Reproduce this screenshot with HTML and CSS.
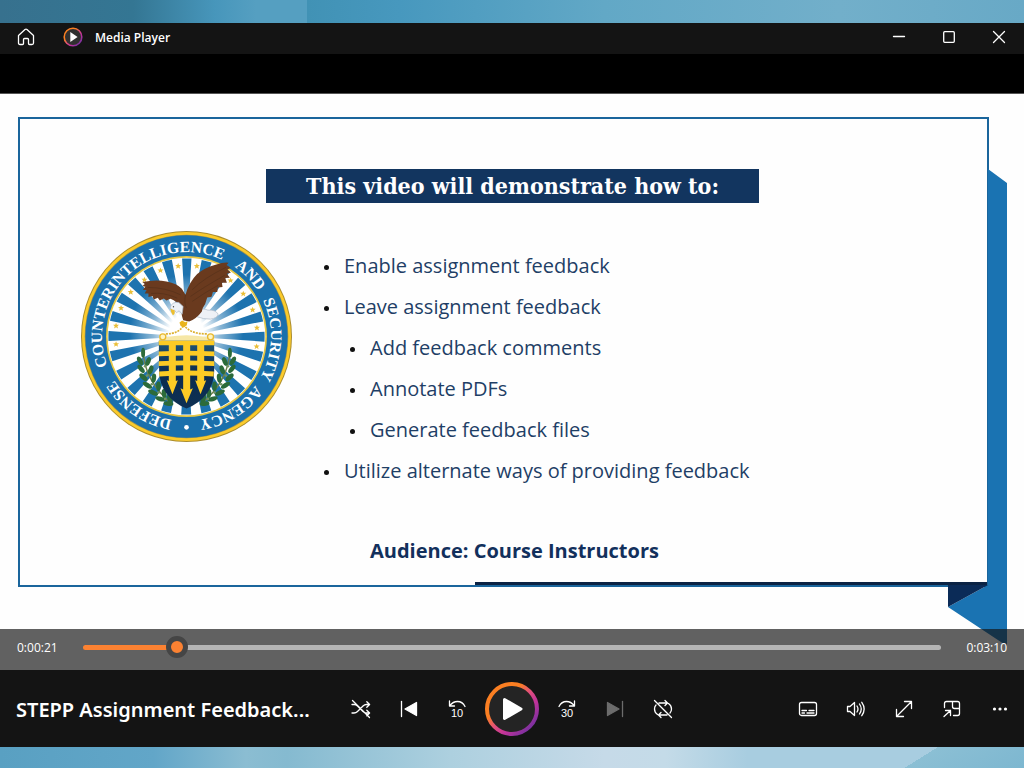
FILE: index.html
```html
<!DOCTYPE html>
<html lang="en">
<head>
  <meta charset="UTF-8">
  <title>Media Player</title>
  <link rel="stylesheet" href="styles.css">
</head>
<body>

  <div class="player">
    <header class="titlebar">
      <button class="home" aria-label="Home">
        <svg width="18" height="18" viewBox="0 0 18 18"><path d="M1.500 7.500 L8 1.600 Q9 .8 10 1.600 L16.500 7.500 V15 Q16.500 16.500 15 16.500 H12.500 Q11.500 16.500 11.500 15.500 V11.500 Q11.500 10.500 10.500 10.500 H7.500 Q6.500 10.500 6.500 11.500 V15.500 Q6.500 16.500 5.500 16.500 H3 Q1.500 16.500 1.500 15 Z"/></svg>
      </button>
      <svg class="app-icon" width="20" height="20" viewBox="0 0 20 20">
        <defs>
          <linearGradient id="ring" x1="0.1" y1="0.1" x2="0.9" y2="0.9">
            <stop offset="0.3" stop-color="#fb7f22"/>
            <stop offset="0.5" stop-color="#e2507a"/>
            <stop offset="0.7" stop-color="#c2339a"/>
            <stop offset="1" stop-color="#7430a0"/>
          </linearGradient>
        </defs>
        <circle cx="10" cy="10" r="8.8" fill="#303030" stroke="url(#ring)" stroke-width="1.6"/>
        <path d="M7.300 5 L14.600 10 L7.300 15 Z" fill="#fff"/>
      </svg>
      <span class="app-name">Media Player</span>
      <div class="window-buttons">
        <button aria-label="Minimize"><svg width="14" height="14" viewBox="0 0 14 14"><path d="M1.500 6.500 H12.500"/></svg></button>
        <button aria-label="Maximize"><svg width="14" height="14" viewBox="0 0 14 14"><rect x="1.700" y="1.700" width="10.600" height="10.600" rx="1"/></svg></button>
        <button aria-label="Close"><svg width="14" height="14" viewBox="0 0 14 14"><path d="M1.500 1.500 L12.500 12.500 M12.500 1.500 L1.500 12.500"/></svg></button>
      </div>
    </header>

    <main class="stage">
      <div class="slide">
        <section class="frame">
          <h1>This video will demonstrate how to:</h1>
          <div class="slide-body">
            <svg class="seal" viewBox="32 34 632 632" role="img" aria-label="Defense Counterintelligence and Security Agency seal">
              <defs>
                <radialGradient id="glow">
                  <stop offset="0.25" stop-color="#fff"/>
                  <stop offset="0.5" stop-color="#fff" stop-opacity="0.5"/>
                  <stop offset="0.85" stop-color="#fff" stop-opacity="0"/>
                </radialGradient>
                <linearGradient id="shield" x1="0" y1="0" x2="0" y2="1">
                  <stop offset="0" stop-color="#1d5579"/>
                  <stop offset="0.5" stop-color="#0b2a4e"/>
                  <stop offset="1" stop-color="#0d3154"/>
                </linearGradient>
                <path id="text-ring" d="M348 603 A253 253 0 0 1 348 97 A253 253 0 0 1 348 603"/>
                <path id="star" d="M0 -9 L2.500 -3 L9 -3 L4 1.500 L6 8 L0 4 L-6 8 L-4 1.500 L-9 -3 L-2.500 -3 Z"/>
                <g id="laurel">
                  <path d="M38 78 Q42 170 126 238" fill="none" stroke="#6d7f4a" stroke-width="4"/>
                  <g fill="#2c6b3a">
                    <ellipse cx="38" cy="84" rx="6" ry="15"/>
                    <ellipse cx="29" cy="108" rx="7" ry="14" transform="rotate(-30 29 108)"/>
                    <ellipse cx="53" cy="110" rx="7" ry="14" transform="rotate(22 53 110)"/>
                    <ellipse cx="32" cy="132" rx="7" ry="15" transform="rotate(-38 32 132)"/>
                    <ellipse cx="61" cy="135" rx="7" ry="14" transform="rotate(18 61 135)"/>
                    <ellipse cx="39" cy="157" rx="7" ry="15" transform="rotate(-48 39 157)"/>
                    <ellipse cx="70" cy="160" rx="7" ry="14" transform="rotate(8 70 160)"/>
                    <ellipse cx="51" cy="181" rx="7" ry="16" transform="rotate(-58 51 181)"/>
                    <ellipse cx="84" cy="184" rx="7" ry="14"/>
                    <ellipse cx="68" cy="203" rx="7" ry="16" transform="rotate(-66 68 203)"/>
                    <ellipse cx="101" cy="206" rx="7" ry="14" transform="rotate(-8 101 206)"/>
                    <ellipse cx="90" cy="222" rx="7" ry="16" transform="rotate(-74 90 222)"/>
                    <ellipse cx="118" cy="222" rx="7" ry="14" transform="rotate(-18 118 222)"/>
                    <ellipse cx="114" cy="236" rx="7" ry="15" transform="rotate(-82 114 236)"/>
                  </g>
                  <g fill="#6f9163">
                    <circle cx="44" cy="124" r="4"/>
                    <circle cx="50" cy="152" r="4"/>
                    <circle cx="64" cy="178" r="4"/>
                    <circle cx="84" cy="203" r="4"/>
                    <circle cx="104" cy="222" r="4"/>
                  </g>
                </g>
              </defs>

              <!-- rings -->
              <circle cx="348" cy="350" r="316" fill="#a98b2c"/>
              <circle cx="348" cy="350" r="313" fill="#fbcb2c"/>
              <circle cx="348" cy="350" r="305" fill="#a4954a"/>
              <circle cx="348" cy="350" r="303" fill="#1a70ac"/>
              <circle cx="348" cy="350" r="241" fill="#e8c844"/>
              <circle cx="348" cy="350" r="236" fill="#fff"/>

              <!-- 24 rays -->
              <circle cx="348" cy="350" r="117" fill="none" stroke="#1d73af" stroke-width="234" pathLength="48" stroke-dasharray="1 1" stroke-dashoffset="0.5" transform="rotate(-90 348 350)"/>
              <circle cx="348" cy="335" r="200" fill="url(#glow)"/>

              <g fill="#eabf38">
                <use href="#star" x="323" y="139"/>
                <use href="#star" x="379" y="139"/>
                <use href="#star" x="270" y="152"/>
                <use href="#star" x="222" y="180"/>
                <use href="#star" x="181" y="217"/>
                <use href="#star" x="152" y="265"/>
                <use href="#star" x="137" y="318"/>
                <use href="#star" x="137" y="373"/>
                <use href="#star" x="480" y="182"/>
                <use href="#star" x="518" y="222"/>
                <use href="#star" x="546" y="270"/>
                <use href="#star" x="559" y="324"/>
                <use href="#star" x="558" y="380"/>
              </g>

              <g class="seal-text">
                <text><textPath href="#text-ring" startOffset="152">DEFENSE</textPath></text>
                <text><textPath href="#text-ring" startOffset="606">COUNTERINTELLIGENCE</textPath></text>
                <text><textPath href="#text-ring" startOffset="998">AND</textPath></text>
                <text><textPath href="#text-ring" startOffset="1201">SECURITY</textPath></text>
                <text><textPath href="#text-ring" startOffset="1450">AGENCY</textPath></text>
              </g>
              <circle cx="348" cy="622" r="7" fill="#fff"/>

              <!-- laurels and shield -->
              <g transform="translate(180 315)">
                <use href="#laurel"/>
                <use href="#laurel" transform="translate(336 0) scale(-1 1)"/>
                <path d="M88 30 Q96 42 112 36 Q168 26 224 36 Q240 42 250 30 L252 52 H85 Z" fill="#f6e7a6"/>
                <path d="M85 48 H251 V138 Q250 215 168 251 Q88 215 86 138 Z" fill="url(#shield)"/>
                <g fill="#fccb25">
                  <path d="M85 48 H251 V61 H85 Z"/>
                  <path d="M85 80 Q168 76 251 80 V94 Q168 90 85 94 Z"/>
                  <path d="M85 109 Q168 105 251 109 V123 Q168 119 85 123 Z"/>
                  <path d="M86 140 Q168 134 250 140 L249 155 Q168 149 87 155 Z"/>
                  <path d="M115 50 H136 V168 L142 166 L126 208 L109 166 L115 168 Z"/>
                  <path d="M158 50 H179 V194 L187 190 L168 235 L150 190 L158 194 Z"/>
                  <path d="M200 50 H221 V168 L227 166 L210 208 L194 166 L200 168 Z"/>
                </g>
                <circle cx="97" cy="36" r="9" fill="#fff3c0" stroke="#e8b92e" stroke-width="4"/>
                <circle cx="240" cy="36" r="9" fill="#fff3c0" stroke="#e8b92e" stroke-width="4"/>
                <path d="M106 27 Q145 28 160 0 Q178 28 230 27" fill="none" stroke="#dcb02f" stroke-width="5" stroke-dasharray="6 3"/>
              </g>

              <!-- eagle -->
              <g transform="translate(180 105)">
                <path d="M200 168 Q215 158 232 166 Q254 164 263 178 Q260 190 240 193 Q220 194 194 184 Z" fill="#eef1f6" stroke="#aab6c6" stroke-width="2"/>
                <path d="M36 82 Q75 73 108 80 Q140 86 154 102 L165 120 Q176 82 200 58 Q220 40 255 30 Q280 22 294 24 L288 31 L300 39 L291 44 L301 54 L289 57 L298 69 L284 70 L289 84 L274 84 L276 97 L262 98 L260 112 L247 112 L243 126 L230 128 L224 148 Q215 160 214 170 Q198 192 176 200 L158 196 Q150 174 154 157 Q140 140 120 132 L108 137 L100 131 L88 137 L82 129 L70 134 L66 124 L54 127 L54 116 L43 116 L48 106 L37 105 L45 96 L36 94 L43 88 Z" fill="#6a3a1e"/>
                <g fill="none" stroke="#55301a" stroke-width="2">
                  <path d="M165 120 Q160 145 168 160"/>
                  <path d="M180 125 Q215 100 282 62"/>
                  <path d="M185 140 Q225 112 262 92"/>
                  <path d="M185 105 Q220 70 286 38"/>
                  <path d="M150 120 Q105 98 52 98"/>
                  <path d="M140 130 Q100 112 62 116"/>
                </g>
                <path d="M119 157 Q126 140 145 143 L158 155 L155 178 L146 168 L138 174 L132 166 L124 168 Z" fill="#edf1f6" stroke="#a8b5c6" stroke-width="2"/>
                <circle cx="129" cy="156" r="2" fill="#444"/>
                <path d="M120 162 L132 166 Q135 178 127 181 Q121 174 120 162 Z" fill="#edbe2e"/>
                <path d="M147 203 L155 197 L164 202 L171 199 L169 211 L160 218 L150 213 Z" fill="#e9b41c"/>
              </g>
            </svg>

            <div class="slide-text">
              <ul>
                <li>Enable assignment feedback</li>
                <li>Leave assignment feedback
                  <ul>
                    <li>Add feedback comments</li>
                    <li>Annotate PDFs</li>
                    <li>Generate feedback files</li>
                  </ul>
                </li>
                <li>Utilize alternate ways of providing feedback</li>
              </ul>
              <p class="audience">Audience: Course Instructors</p>
            </div>
          </div>
          <svg class="ribbon" width="60" height="478" viewBox="0 0 60 478">
            <path d="M40 0 L59 14 V477 L0 438 L40 416 Z" fill="#1a73b2"/>
            <path d="M0 416 H40 L0 438 Z" fill="#0b2b57"/>
          </svg>
        </section>
      </div>

      <div class="seekbar">
        <label for="seek">0:00:21</label>
        <input id="seek" type="range" min="0" max="190" value="19" style="--played: 11%">
        <span>0:03:10</span>
      </div>
    </main>

    <footer class="controls">
      <div class="media-title">STEPP Assignment Feedback...</div>
      <div class="transport">
        <button aria-label="Shuffle off">
          <svg width="20" height="20" viewBox="0 0 20 20"><path d="M1 5.500 H3 Q5 5.500 6.500 7 L12 12.500 Q13.500 14 15.500 14 H18.500 M1 14 H3 Q5 14 6.500 12.500 L12 7 Q13.500 5.500 15.500 5.500 H18.500 M15.800 2.800 L18.600 5.500 L15.800 8.200 M15.800 11.300 L18.600 14 L15.800 16.700 M1.500 1.500 L18.500 18.500"/></svg>
        </button>
        <button aria-label="Previous">
          <svg width="20" height="20" viewBox="0 0 20 20"><path d="M2.500 2.500 V17.500"/><path class="solid" d="M17.500 3.500 V16.500 L6 10 Z"/></svg>
        </button>
        <button aria-label="Skip back 10 seconds">
          <svg width="20" height="20" viewBox="0 0 20 20"><path d="M2.500 2 V7 H7.500 M2.800 6.600 Q6 2.500 10.500 2.500 Q15.500 2.500 18 7.500"/><text x="10" y="18">10</text></svg>
        </button>
        <button class="play" aria-label="Play">
          <svg width="54" height="54" viewBox="0 0 54 54">
            <circle cx="27" cy="27" r="25" fill="#242424" stroke="url(#ring)" stroke-width="4"/>
            <path d="M19.500 17.500 L36 27 L19.500 36.500 Z" fill="#fff" stroke="#fff" stroke-width="3" stroke-linejoin="round"/>
          </svg>
        </button>
        <button aria-label="Skip forward 30 seconds">
          <svg width="20" height="20" viewBox="0 0 20 20"><path d="M17.500 2 V7 H12.500 M17.200 6.600 Q14 2.500 9.500 2.500 Q4.500 2.500 2 7.500"/><text x="10" y="18">30</text></svg>
        </button>
        <button class="dim" aria-label="Next" disabled>
          <svg width="20" height="20" viewBox="0 0 20 20"><path d="M17.500 2.500 V17.500"/><path class="solid" d="M2.500 3.500 V16.500 L14 10 Z"/></svg>
        </button>
        <button aria-label="Repeat off">
          <svg width="20" height="20" viewBox="0 0 20 20"><path d="M6 4 H14 M12 1.500 L14.500 4 L12 6.500 M15.500 4.500 Q18.500 6.500 18.500 10 Q18.500 12.500 17 14 M14 16 H6 M8 13.500 L5.500 16 L8 18.500 M4.500 15.500 Q1.500 13.500 1.500 10 Q1.500 7.500 3 6 M1.500 1.500 L18.500 18.500"/></svg>
        </button>
      </div>
      <div class="tools">
        <button aria-label="Subtitles">
          <svg width="20" height="20" viewBox="0 0 20 20"><rect x="1.500" y="3.500" width="17" height="13" rx="2"/><path d="M4 11.500 H8.500 M11 11.500 H16 M4 14 H6.500 M9 14 H16"/></svg>
        </button>
        <button aria-label="Volume">
          <svg width="20" height="20" viewBox="0 0 20 20"><path d="M1.500 7.500 H4 L8.500 3.500 V16.500 L4 12.500 H1.500 Z M11 7 Q13 10 11 13 M13.500 5 Q17 10 13.500 15 M15.800 3.300 Q20.500 10 15.800 16.700"/></svg>
        </button>
        <button aria-label="Full screen">
          <svg width="20" height="20" viewBox="0 0 20 20"><path d="M2.500 17.500 L17.500 2.500 M10.500 2.500 H17.500 V9.500 M2.500 10.500 V17.500 H9.500"/></svg>
        </button>
        <button aria-label="Mini player">
          <svg width="20" height="20" viewBox="0 0 20 20"><path d="M2.500 8.500 V4.500 Q2.500 2.500 4.500 2.500 H15.500 Q17.500 2.500 17.500 4.500 V14.500 Q17.500 16.500 15.500 16.500 H11.500 M10.500 2.500 V7.500 Q10.500 9.500 12.500 9.500 H17.500 M2 17.500 L8.500 11.500 M3.500 11.500 H8.500 V16.500"/></svg>
        </button>
        <button aria-label="More options">
          <svg width="20" height="20" viewBox="0 0 20 20"><g class="dots"><circle cx="4.500" cy="10" r="1.600"/><circle cx="10" cy="10" r="1.600"/><circle cx="15.500" cy="10" r="1.600"/></g></svg>
        </button>
      </div>
    </footer>
  </div>

</body>
</html>
```
FILE: styles.css
```css
* {
  box-sizing: border-box;
}
body {
  margin: 0;
  min-height: 100vh;
  padding: 23px 0 21px;
  display: flex;
  font-family: "Open Sans", "Noto Sans", sans-serif;
  color: #fff;
  background:
    linear-gradient(148deg, transparent 18px, #8bbfd4 18px, #7db7d0) right bottom / 120px 21px no-repeat,
    linear-gradient(to right, #59a0c2, #62a6c8 15%, #8bbdd2 24%, #85bad0 28%, #add0df 44%, #c6dae8 59%, #c4dbe8 65%, #a8cde0 73%, #a8cde0) bottom / 100% 21px no-repeat,
    linear-gradient(to right, #37718e, #347693 13%, #4796bb 21%, #559fc1 25%, #559fc1 30%, #4192b5 30%, #4798be 39%, #62a8c6 59%, #72afca 82%, #68a9c6) top / 100% 23px no-repeat;
}
button {
  padding: 0;
  border: 0;
  background: none;
  color: inherit;
  display: flex;
  align-items: center;
  justify-content: center;
}
button svg {
  fill: none;
  stroke: currentColor;
  stroke-width: 1.3;
  stroke-linejoin: round;
  stroke-linecap: round;
}
.player {
  flex: 1;
  display: flex;
  flex-direction: column;
  background-color: #141414;
}

/* title bar */
.titlebar {
  height: 31px;
  display: flex;
  align-items: center;
  padding-bottom: 3px;
}
.home {
  width: 51px;
}
.app-icon {
  margin-left: 12px;
}
.app-name {
  margin-left: 12px;
  font-size: 12px;
  font-weight: 600;
}
.window-buttons {
  margin-left: auto;
  display: flex;
}
.window-buttons button {
  width: 50px;
}

/* video */
.stage {
  position: relative;
  flex: 1;
  display: flex;
  border-top: 39px solid #000;
}
.slide {
  flex: 1;
  display: flex;
  padding: 23px 35px 83px 18px;
  border-top: 1px solid #555;
  background-color: #fefefe;
}
.frame {
  position: relative;
  flex: 1;
  padding-top: 50px;
  border: 2px solid #1a659c;
}
.frame::after {
  content: "";
  position: absolute;
  right: 0;
  bottom: 0;
  width: 53%;
  height: 3px;
  background-color: #0b2344;
}
.frame h1 {
  margin: 0 auto 0 246px;
  width: 51%;
  line-height: 34px;
  font-family: "DejaVu Serif Condensed", "DejaVu Serif", serif;
  font-size: 23px;
  font-weight: bold;
  text-align: center;
  background-color: #12355f;
}
.slide-body {
  display: flex;
  align-items: flex-start;
  gap: 32px;
  padding: 28px 0 0 61px;
}
.seal {
  width: 211px;
  height: 211px;
}
.seal-text {
  font-family: "Liberation Serif", serif;
  font-size: 47px;
  font-weight: bold;
  fill: #fff;
  text-anchor: middle;
}
.slide-text {
  padding-top: 14px;
  font-size: 20px;
  color: #1f3f66;
}
.slide-text ul {
  margin: 0;
  padding: 0;
  list-style: none;
  line-height: 41px;
}
.slide-text ul ul {
  padding-left: 26px;
}
.slide-text li::before {
  content: "";
  display: inline-block;
  width: 5px;
  height: 5px;
  margin-right: 15px;
  border-radius: 50%;
  vertical-align: middle;
  background-color: #111;
}
.audience {
  margin: 46px 0 0 46px;
  line-height: 27px;
  font-weight: bold;
  color: #12305c;
}
.ribbon {
  position: absolute;
  top: 50px;
  right: -21px;
}

/* seek bar, over the bottom of the video */
.seekbar {
  position: absolute;
  left: 0;
  right: 0;
  bottom: 0;
  height: 41px;
  padding: 0 17px 5px;
  display: flex;
  align-items: center;
  gap: 25px;
  font-size: 12px;
  background-color: rgba(20, 20, 20, 0.67);
}
.seekbar input {
  flex: 1;
  height: 22px;
  margin: 0;
  appearance: none;
  background: none;
}
.seekbar input::-webkit-slider-runnable-track {
  height: 5px;
  border-radius: 3px;
  background: linear-gradient(to right, #fc8232 var(--played), #b5b5b5 var(--played));
}
.seekbar input::-webkit-slider-thumb {
  appearance: none;
  width: 22px;
  height: 22px;
  margin-top: -9px;
  border: 5px solid #454545;
  border-radius: 50%;
  background-color: #fc8232;
}

/* controls */
.controls {
  height: 77px;
  padding-top: 1px;
  display: grid;
  grid-template-columns: 1fr auto 1fr;
  align-items: center;
}
.media-title {
  padding-left: 16px;
  font-family: "Noto Sans", "Open Sans", sans-serif;
  font-size: 20px;
  font-weight: 600;
  white-space: nowrap;
}
.transport,
.tools {
  display: flex;
  align-items: center;
}
.tools {
  justify-content: flex-end;
}
.controls button {
  width: 48px;
  height: 48px;
}
.controls .play {
  width: 62px;
}
.controls .solid,
.controls .dots {
  fill: currentColor;
}
.controls .dots {
  stroke: none;
}
.controls .dim {
  color: #6c6c6c;
}
.controls text {
  font-size: 11px;
  font-weight: 500;
  text-anchor: middle;
  fill: currentColor;
  stroke: none;
}
```
